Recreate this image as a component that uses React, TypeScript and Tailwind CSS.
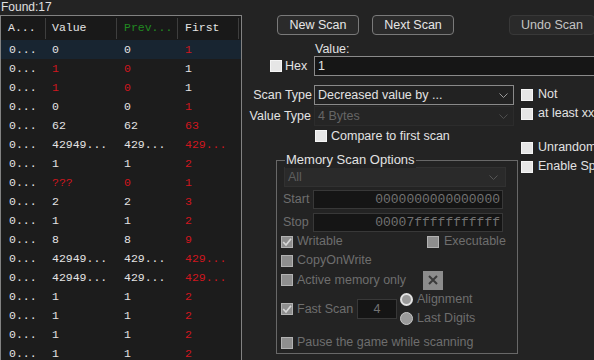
import React from 'react';

const sans = "font-['Liberation_Sans',Arial,sans-serif]";
const mono = "font-['Liberation_Mono','DejaVu_Sans_Mono',monospace]";

type Row = { v: string; vr?: boolean; p: string; pr?: boolean; f: string; fr?: boolean };

const rows: Row[] = [
  { v: '0', p: '0', f: '1', fr: true },
  { v: '1', vr: true, p: '0', pr: true, f: '1' },
  { v: '1', vr: true, p: '0', pr: true, f: '1' },
  { v: '0', p: '0', f: '1', fr: true },
  { v: '62', p: '62', f: '63', fr: true },
  { v: '42949...', p: '429...', f: '429...', fr: true },
  { v: '1', p: '1', f: '2', fr: true },
  { v: '???', vr: true, p: '0', pr: true, f: '1', fr: true },
  { v: '2', p: '2', f: '3', fr: true },
  { v: '1', p: '1', f: '2', fr: true },
  { v: '8', p: '8', f: '9', fr: true },
  { v: '42949...', p: '429...', f: '429...', fr: true },
  { v: '42949...', p: '429...', f: '429...', fr: true },
  { v: '1', p: '1', f: '2', fr: true },
  { v: '1', p: '1', f: '2', fr: true },
  { v: '1', p: '1', f: '2', fr: true },
  { v: '1', p: '1', f: '2', fr: true },
];

function Check({ checked, disabled }: { checked?: boolean; disabled?: boolean }) {
  if (!disabled) {
    return <span className="block w-[12px] h-[12px] shrink-0 bg-[#e6e6e6] border border-[#f5f5f5]" />;
  }
  return (
    <span className="flex w-[12px] h-[12px] shrink-0 items-center justify-center bg-[#8e8e8e] border border-[#b2b2b2]">
      {checked && (
        <svg width="10" height="10" viewBox="0 0 10 10">
          <path d="M1.2 5 L4 8 L9 1.8" stroke="#d6d6d6" strokeWidth="1.7" fill="none" />
        </svg>
      )}
    </span>
  );
}

function Chevron({ color }: { color: string }) {
  return (
    <svg width="9" height="5" viewBox="0 0 9 5">
      <path d="M0.5 0.5 L4.5 4.5 L8.5 0.5" stroke={color} strokeWidth="1" fill="none" />
    </svg>
  );
}

const red = (on?: boolean) => (on ? 'text-[#d0161e]' : 'text-[#e4e4e4]');

export default function App() {
  return (
    <div className={`w-[594px] h-[360px] flex overflow-hidden bg-[#232323] ${sans}`}>
      {/* results list */}
      <div className="w-[242px] shrink-0 h-full flex flex-col overflow-hidden">
        <div className="h-[15px] shrink-0 pl-[1px] text-[12px] leading-[14px] text-[#e0e0e0]">Found:17</div>
        <div className={`shrink-0 h-[400px] border-x border-t border-[#828282] bg-[#1c1c1c] text-[11.5px] ${mono}`}>
          <div className="grid grid-cols-[45px_71px_61px_61px] h-[24px] bg-[#191919] items-center">
            <div className="h-[21px] flex items-center pl-[7px] border-r border-[#3e3e3e] text-[#e4e4e4]">A...</div>
            <div className="h-[21px] flex items-center pl-[6px] border-r border-[#3e3e3e] text-[#e4e4e4]">Value</div>
            <div className="h-[21px] flex items-center pl-[7px] border-r border-[#3e3e3e] text-[#218a21]">Prev...</div>
            <div className="h-[21px] flex items-center pl-[7px] border-r border-[#3e3e3e] text-[#e4e4e4]">First</div>
          </div>
          {rows.map((r, i) => (
            <div
              key={i}
              className={`grid grid-cols-[45px_71px_61px_61px] h-[19px] items-center ${i === 0 ? 'bg-[#182531]' : ''}`}
            >
              <div className="pl-[8px] text-[#e4e4e4]">0...</div>
              <div className={`pl-[6px] ${red(r.vr)}`}>{r.v}</div>
              <div className={`pl-[7px] ${red(r.pr)}`}>{r.p}</div>
              <div className={`pl-[7px] ${red(r.fr)}`}>{r.f}</div>
            </div>
          ))}
        </div>
      </div>

      {/* scan panel */}
      <div className="flex-1 min-w-0 overflow-hidden flex flex-col whitespace-nowrap text-[12.5px] text-[#e2e2e2]">
        <div className="flex pt-[15px] pl-[35px]">
          <button className="w-[82px] h-[20px] shrink-0 rounded-[4px] border border-[#7a7a7a] bg-[#2b2b2b] text-[#e6e6e6] leading-none">
            New Scan
          </button>
          <button className="ml-[13px] w-[82px] h-[20px] shrink-0 rounded-[4px] border border-[#7a7a7a] bg-[#2b2b2b] text-[#e6e6e6] leading-none">
            Next Scan
          </button>
          <button className="ml-[55px] w-[86px] h-[20px] shrink-0 rounded-[4px] border border-[#383838] bg-[#2a2a2a] text-[#c4c4c4] leading-none">
            Undo Scan
          </button>
        </div>

        <div className="h-[21px] pl-[73px] flex items-end leading-[14px]">Value:</div>
        <div className="flex items-center h-[20px] pl-[28px]">
          <div className="w-[44px] shrink-0 flex items-center gap-[3px]">
            <Check />
            <span>Hex</span>
          </div>
          <div className="w-[300px] h-[20px] shrink-0 bg-[#161616] border border-[#8a8a8a] pl-[3px] leading-[18px]">1</div>
        </div>

        <div className="flex mt-[9px]">
          <div className="w-[279px] shrink-0 flex flex-col">
            <div className="flex items-center h-[20px]">
              <span className="w-[72px] text-right pr-[2px]">Scan Type</span>
              <div className="w-[200px] h-[20px] border border-[#8a8a8a] bg-[#222222] flex items-center justify-between pl-[3px] pr-[5px]">
                <span>Decreased value by ...</span>
                <Chevron color="#9a9a9a" />
              </div>
            </div>
            <div className="flex items-center h-[20px] mt-[1px]">
              <span className="w-[72px] text-right pr-[3px]">Value Type</span>
              <div className="w-[200px] h-[20px] border border-[#2c2c2c] bg-[#252525] flex items-center justify-between pl-[3px] pr-[5px] text-[#666666]">
                <span>4 Bytes</span>
                <Chevron color="#4e4e4e" />
              </div>
            </div>
            <div className="flex items-center h-[20px] pl-[73px] gap-[4px]">
              <Check />
              <span>Compare to first scan</span>
            </div>

            {/* memory scan options */}
            <div className="relative ml-[34px] mt-[14px] w-[242px] h-[194px] border border-[#686868] text-[#6e6e6e]">
              <span className="absolute left-[8px] top-[-9px] bg-[#232323] px-[1px] leading-[16px] text-[13px] text-[#e2e2e2]">
                Memory Scan Options
              </span>
              <div className="pt-[6px] pl-[7px]">
                <div className="w-[222px] h-[20px] bg-[#2a2a2a] border border-[#313131] flex items-center justify-between pl-[3px] pr-[7px] text-[#5e5e5e]">
                  <span>All</span>
                  <Chevron color="#555555" />
                </div>
                <div className="flex items-center h-[19px] mt-[3px]">
                  <span className="w-[30px] -ml-[1px]">Start</span>
                  <div className={`w-[190px] h-[19px] bg-[#151515] border border-[#383838] text-right pr-[2px] text-[13px] leading-[17px] text-[#727272] ${mono}`}>
                    0000000000000000
                  </div>
                </div>
                <div className="flex items-center h-[19px] mt-[4px]">
                  <span className="w-[30px] -ml-[1px]">Stop</span>
                  <div className={`w-[190px] h-[19px] bg-[#151515] border border-[#383838] text-right pr-[2px] text-[13px] leading-[17px] text-[#727272] ${mono}`}>
                    00007fffffffffff
                  </div>
                </div>
              </div>
              <div className="pl-[4px]">
                <div className="flex items-center h-[19px]">
                  <div className="w-[146px] flex items-center gap-[4px]">
                    <Check disabled checked />
                    <span>Writable</span>
                  </div>
                  <div className="flex items-center gap-[5px]">
                    <Check disabled />
                    <span>Executable</span>
                  </div>
                </div>
                <div className="flex items-center h-[19px] gap-[4px]">
                  <Check disabled />
                  <span>CopyOnWrite</span>
                </div>
                <div className="flex items-center h-[20px]">
                  <div className="w-[142px] flex items-center gap-[4px]">
                    <Check disabled />
                    <span>Active memory only</span>
                  </div>
                  <div className="w-[20px] h-[19px] bg-[#8c8c8c] flex items-center justify-center">
                    <svg width="10" height="10" viewBox="0 0 10 10">
                      <path d="M1 1 L9 9 M9 1 L1 9" stroke="#3a3a3a" strokeWidth="2" />
                    </svg>
                  </div>
                </div>
                <div className="flex items-center h-[38px]">
                  <div className="w-[76px] flex items-center gap-[4px]">
                    <Check disabled checked />
                    <span>Fast Scan</span>
                  </div>
                  <div className="w-[40px] h-[20px] bg-[#151515] border border-[#383838] flex items-center justify-center text-[#727272]">
                    4
                  </div>
                  <div className="ml-[3px] flex flex-col">
                    <div className="flex items-center h-[19px] gap-[4px]">
                      <span className="block w-[13px] h-[13px] rounded-full bg-[#9a9a9a] border-[2px] border-[#e2e2e2]" />
                      <span>Alignment</span>
                    </div>
                    <div className="flex items-center h-[19px] gap-[4px]">
                      <span className="block w-[13px] h-[13px] rounded-full bg-[#9a9a9a] border border-[#c8c8c8]" />
                      <span>Last Digits</span>
                    </div>
                  </div>
                </div>
                <div className="flex items-center h-[19px] mt-[5px] gap-[4px]">
                  <Check disabled />
                  <span>Pause the game while scanning</span>
                </div>
              </div>
            </div>
          </div>

          {/* extra options */}
          <div className="flex flex-col">
            <div className="flex items-center h-[19px] gap-[5px]">
              <Check />
              <span>Not</span>
            </div>
            <div className="flex items-center h-[19px] gap-[5px]">
              <Check />
              <span>at least xx</span>
            </div>
            <div className="flex items-center h-[19px] gap-[5px] mt-[15px]">
              <Check />
              <span>Unrandom</span>
            </div>
            <div className="flex items-center h-[19px] gap-[5px]">
              <Check />
              <span>Enable Sp</span>
            </div>
          </div>
        </div>
      </div>
    </div>
  );
}
